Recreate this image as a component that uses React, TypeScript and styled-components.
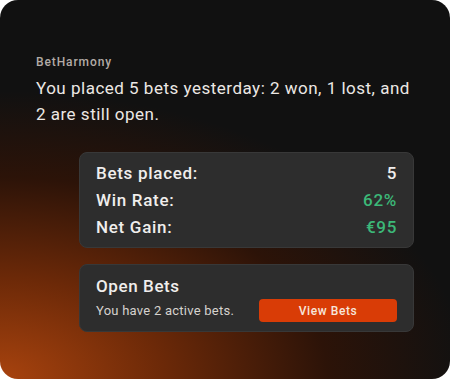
import styled, { createGlobalStyle } from 'styled-components'

const GlobalStyle = createGlobalStyle`
  html, body {
    margin: 0;
    padding: 0;
    background: #ffffff;
  }
  body {
    font-family: Roboto, "Liberation Sans", sans-serif;
  }
`

const Card = styled.div`
  width: 450px;
  height: 379px;
  box-sizing: border-box;
  border-radius: 18px;
  overflow: hidden;
  background:
    radial-gradient(ellipse 130% 95% at 0% 100%, #a8430e 0%, #6c2908 28%, #2c1308 56%, rgba(17, 17, 17, 0) 80%),
    #111111;
  padding: 54px 36px 0 36px;
  display: flex;
  flex-direction: column;
`

const Sender = styled.div`
  font-size: 12px;
  font-weight: 500;
  color: #b3aba6;
  letter-spacing: 0.9px;
  line-height: 16px;
`

const Message = styled.p`
  margin: 5px 0 0 0;
  font-size: 17px;
  line-height: 26px;
  color: #ece8e4;
  letter-spacing: 0.5px;
`

const Panel = styled.div<{ $top: number }>`
  margin: ${({ $top }) => $top}px 0 0 43px;
  width: 335px;
  box-sizing: border-box;
  background: #2d2d2d;
  border: 1px solid #383838;
  border-radius: 8px;
`

const Stats = styled(Panel)`
  padding: 6px 16px 7px 16px;
  display: flex;
  flex-direction: column;
`

const StatRow = styled.div`
  display: flex;
  justify-content: space-between;
  align-items: center;
  height: 27px;
  font-size: 17px;
  font-weight: 500;
  letter-spacing: 0.7px;
  color: #f0eeec;
`

const Value = styled.span<{ $good?: boolean }>`
  color: ${({ $good }) => ($good ? '#3cb878' : '#f0eeec')};
`

const OpenBets = styled(Panel)`
  padding: 10px 16px 9px 16px;
`

const OpenTitle = styled.div`
  font-size: 17px;
  font-weight: 500;
  letter-spacing: 0.6px;
  color: #f0eeec;
  line-height: 22px;
`

const OpenRow = styled.div`
  display: flex;
  justify-content: space-between;
  align-items: center;
  margin-top: 2px;
`

const OpenText = styled.span`
  font-size: 13px;
  letter-spacing: 0.25px;
  color: #d6d2ce;
`

const ViewButton = styled.button`
  width: 138px;
  height: 23px;
  border: none;
  border-radius: 4px;
  background: #d93c06;
  color: #f6e6dc;
  font-family: Roboto, "Liberation Sans", sans-serif;
  font-size: 12px;
  font-weight: 500;
  letter-spacing: 0.6px;
  cursor: pointer;
`

export default function App() {
  return (
    <>
      <GlobalStyle />
      <Card>
        <Sender>BetHarmony</Sender>
        <Message>
          You placed 5 bets yesterday: 2 won, 1 lost, and
          <br />2 are still open.
        </Message>
        <Stats $top={25}>
          <StatRow>
            <span>Bets placed:</span>
            <Value>5</Value>
          </StatRow>
          <StatRow>
            <span>Win Rate:</span>
            <Value $good>62%</Value>
          </StatRow>
          <StatRow>
            <span>Net Gain:</span>
            <Value $good>€95</Value>
          </StatRow>
        </Stats>
        <OpenBets $top={16}>
          <OpenTitle>Open Bets</OpenTitle>
          <OpenRow>
            <OpenText>You have 2 active bets.</OpenText>
            <ViewButton>View Bets</ViewButton>
          </OpenRow>
        </OpenBets>
      </Card>
    </>
  )
}
